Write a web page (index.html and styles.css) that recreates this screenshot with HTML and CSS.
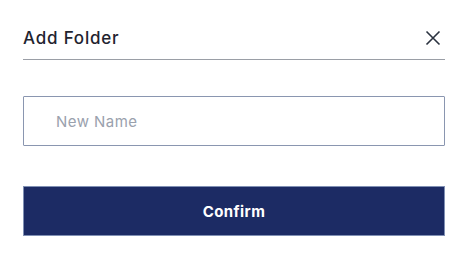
FILE: index.html
```html
<!DOCTYPE html>
<html>
<head>
<meta charset="utf-8">
<link rel="stylesheet" href="styles.css">
</head>
<body>
<div class="dialog">
  <div class="header">
    <h2 class="title">Add Folder</h2>
    <button class="close" aria-label="Close">
      <svg width="16" height="16" viewBox="0 0 16 16"><path d="M1.5 1.5 L14.5 14.5 M14.5 1.5 L1.5 14.5" stroke="#2b3340" stroke-width="1.6" fill="none"/></svg>
    </button>
  </div>
  <input class="name-input" type="text" placeholder="New Name">
  <button class="confirm">Confirm</button>
</div>
</body>
</html>
```
FILE: styles.css
```css
html, body {
  margin: 0;
  padding: 0;
  background: #ffffff;
}
body {
  font-family: Inter, "Noto Sans", sans-serif;
}
.dialog {
  width: 422px;
  margin-left: 23px;
  padding-top: 24px;
  display: flex;
  flex-direction: column;
}
.header {
  display: flex;
  align-items: center;
  justify-content: space-between;
  height: 36px;
  box-sizing: border-box;
  padding-bottom: 7px;
  border-bottom: 1px solid #9a9ea6;
}
.title {
  margin: 0;
  font-size: 17px;
  font-weight: 500;
  color: #1f2430;
  letter-spacing: 0.8px;
}
.close {
  border: 0;
  background: none;
  padding: 0;
  margin-right: 4px;
  width: 16px;
  height: 16px;
  display: flex;
}
.name-input {
  margin-top: 36px;
  height: 50px;
  box-sizing: border-box;
  border: 1px solid #8a96b0;
  padding: 0 0 0 32px;
  font-family: Inter, "Noto Sans", sans-serif;
  font-size: 15px;
  color: #1f2430;
  outline: none;
  border-radius: 1px;
}
.name-input::placeholder {
  color: #9aa1ad;
  letter-spacing: 0.45px;
}
.confirm {
  margin-top: 40px;
  height: 50px;
  box-sizing: border-box;
  background: #1c2b64;
  border: 1px solid #8090b4;
  color: #ffffff;
  font-family: Inter, "Noto Sans", sans-serif;
  font-size: 15px;
  font-weight: 700;
  letter-spacing: 0.4px;
}
```
